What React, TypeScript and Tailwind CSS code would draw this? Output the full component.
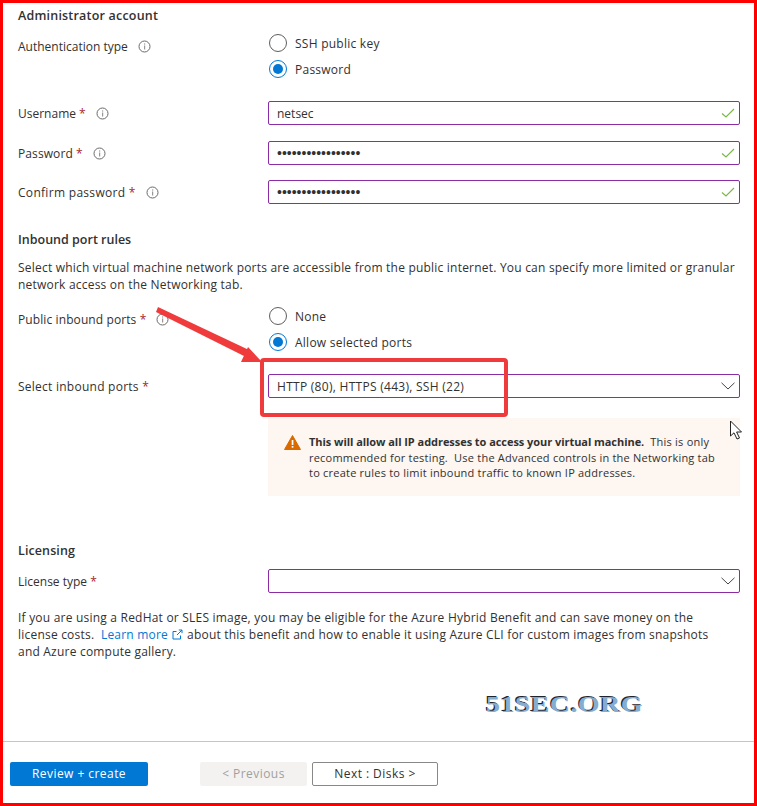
import React from "react";

const Info = () => (
  <svg width="13" height="13" viewBox="0 0 13 13" className="shrink-0">
    <circle cx="6.5" cy="6.5" r="5.5" fill="none" stroke="#6b6a69" strokeWidth="1" />
    <rect x="6" y="5.5" width="1.2" height="4" fill="#9a9896" />
    <rect x="6" y="3.4" width="1.2" height="1.2" fill="#9a9896" />
  </svg>
);

const Star = () => <span className="text-[#a4262c]"> *</span>;

const Label = ({ text, req, info, gap, track = "" }: { text: string; req?: boolean; info?: boolean; gap: string; track?: string }) => (
  <div className="flex items-center">
    <span className={track}>
      {text}
      {req && <Star />}
    </span>
    {info && (
      <span className={gap}>
        <Info />
      </span>
    )}
  </div>
);

const Check = () => (
  <svg width="14" height="12" viewBox="0 0 14 12" className="shrink-0">
    <path d="M1 6.5 L5 10 L13 2" fill="none" stroke="#7ab648" strokeWidth="1.1" />
  </svg>
);

const Chevron = () => (
  <svg width="14" height="8" viewBox="0 0 14 8" className="shrink-0">
    <path d="M0.5 0.8 L7 7 L13.5 0.8" fill="none" stroke="#323130" strokeWidth="0.9" />
  </svg>
);

const Field = ({ children, icon }: { children?: React.ReactNode; icon: React.ReactNode }) => (
  <div className="flex h-[24px] items-center justify-between rounded-[2px] border border-[#8a2da5] pl-[8px] pr-[3px]">
    <span className="flex items-center">{children}</span>
    <span className="mr-[1px] flex items-center">{icon}</span>
  </div>
);

const Dots = () => (
  <span className="text-[14px] leading-none text-[#323130] [font-family:'Liberation_Sans',sans-serif]">
    {"•••••••••••••••••"}
  </span>
);

const Radio = ({ label, on }: { label: string; on?: boolean }) => (
  <div className="flex h-[26px] items-center">
    <span
      className={
        on
          ? "flex h-[18px] w-[18px] items-center justify-center rounded-full border border-[#0078d4]"
          : "flex h-[18px] w-[18px] items-center justify-center rounded-full border border-[#605e5c]"
      }
    >
      {on && <span className="h-[10px] w-[10px] rounded-full bg-[#0078d4]" />}
    </span>
    <span className="ml-[8px] tracking-[0.25px]">{label}</span>
  </div>
);

export default function App() {
  return (
    <div className="relative flex h-[806px] w-[757px] flex-col overflow-hidden border-[3px] border-[#ff0000] bg-white text-[12px] leading-[17px] text-[#323130] [font-family:'Open_Sans',sans-serif]">
      <div className="flex-1 pl-[15px] pr-[14px] pt-[4px]">
        <h2 className="text-[12.5px] font-semibold leading-[17px] tracking-[0.2px]">Administrator account</h2>

        <div className="mt-[6px] grid grid-cols-[250px_1fr]">
          <div className="pt-[8px]">
            <Label text="Authentication type" info gap="ml-[10px]" />
          </div>
          <div className="pl-[1px]">
            <Radio label="SSH public key" />
            <Radio label="Password" on />
          </div>
        </div>

        <div className="mt-[19px] grid grid-cols-[250px_1fr] items-center">
          <Label text="Username" req info gap="ml-[10px]" />
          <Field icon={<Check />}>netsec</Field>
        </div>
        <div className="mt-[16px] grid grid-cols-[250px_1fr] items-center">
          <Label text="Password" req info gap="ml-[10px]" track="tracking-[0.1px]" />
          <Field icon={<Check />}>
            <Dots />
          </Field>
        </div>
        <div className="mt-[15px] grid grid-cols-[250px_1fr] items-center">
          <Label text="Confirm password" req info gap="ml-[10px]" track="tracking-[0.3px]" />
          <Field icon={<Check />}>
            <Dots />
          </Field>
        </div>

        <h2 className="mt-[27px] text-[12.5px] font-semibold leading-[17px]">Inbound port rules</h2>
        <p className="mt-[11px] w-[725px] tracking-[0.21px]">
          Select which virtual machine network ports are accessible from the public internet. You can specify more limited or granular network access on the Networking tab.
        </p>

        <div className="mt-[10px] grid grid-cols-[250px_1fr]">
          <div className="pt-[8px]">
            <Label text="Public inbound ports" req info gap="ml-[10px]" track="tracking-[0.1px]" />
          </div>
          <div className="pl-[1px]">
            <Radio label="None" />
            <Radio label="Allow selected ports" on />
          </div>
        </div>

        <div className="mt-[19px] grid grid-cols-[250px_1fr] items-center">
          <Label text="Select inbound ports" req gap="" track="tracking-[0.25px]" />
          <Field icon={<Chevron />}>
            <span className="tracking-[0.28px]">{"HTTP (80), HTTPS (443), SSH (22)"}</span>
          </Field>
        </div>

        <div className="ml-[250px] mt-[20px] flex h-[78px] items-start bg-[#fdf6f1] pl-[16px] pr-[20px] pt-[16px]">
          <svg width="17" height="15" viewBox="0 0 17 15" className="mt-[1px] shrink-0">
            <path d="M8.5 0.5 L16.5 14.5 H0.5 Z" fill="#d96a00" stroke="#d96a00" strokeLinejoin="round" />
            <rect x="7.7" y="5" width="1.7" height="5" fill="#fff" />
            <rect x="7.7" y="11" width="1.7" height="1.7" fill="#fff" />
          </svg>
          <p className="ml-[8px] text-[11px] leading-[15.5px] tracking-[0.22px]">
            <span className="font-bold tracking-[-0.05px]">This will allow all IP addresses to access your virtual machine.</span>
            {"\u00a0 This is only recommended for testing.\u00a0 Use the Advanced controls in the Networking tab to create rules to limit inbound traffic to known IP addresses."}
          </p>
        </div>

        <h2 className="mt-[46px] text-[12.5px] font-semibold leading-[17px] tracking-[0.1px]">Licensing</h2>
        <div className="mt-[10px] grid grid-cols-[250px_1fr] items-center">
          <Label text="License type" req gap="" />
          <Field icon={<Chevron />} />
        </div>
        <p className="mt-[16px] w-[692px] tracking-[0.21px]">
          If you are using a RedHat or SLES image, you may be eligible for the Azure Hybrid Benefit and can save money on the license costs.{"\u00a0 "}
          <span className="text-[#0078d4]">Learn more</span>
          <svg width="11" height="11" viewBox="0 0 11 11" className="mx-[4px] inline-block align-[-1px]">
            <path d="M8.5 6.5 V10 H1 V2.5 H4.5 M5 6 L10 1 M6.8 1 H10 V4.2" fill="none" stroke="#0078d4" strokeWidth="1" />
          </svg>
          about this benefit and how to enable it using Azure CLI for custom images from snapshots and Azure compute gallery.
        </p>
      </div>

      <div className="flex h-[62px] items-start gap-[3px] border-t border-[#c8c6c4] pl-[7px] pt-[20px]">
        <button className="h-[24px] w-[138px] rounded-[2px] bg-[#0078d4] pb-[1px] tracking-[0.45px] text-white">Review + create</button>
        <button className="ml-[49px] h-[24px] w-[107px] rounded-[2px] bg-[#f3f2f1] pb-[1px] tracking-[0.45px] text-[#a19f9d]">{"< Previous"}</button>
        <button className="ml-[2px] h-[24px] w-[126px] rounded-[2px] border border-[#8a8886] bg-white pb-[1px] tracking-[0.45px]">{"Next : Disks >"}</button>
      </div>

      {/* annotations lying over the form */}
      <div className="absolute left-[257px] top-[355px] h-[59px] w-[248px] rounded-[4px] border-[4px] border-[#ef3b3b]" />
      <svg width="140" height="70" viewBox="0 0 140 70" className="absolute left-[147px] top-[301px]">
        <path d="M8 3 L99 46 L96 53 L6 8 Z" fill="#ef3b3b" />
        <path d="M112 58 L98 43 L91 58 Z" fill="#ef3b3b" />
      </svg>
      <svg width="16" height="20" viewBox="0 0 16 20" className="absolute left-[726px] top-[417px]">
        <path d="M1.5 1 V16 L5 12.8 L8 19 L10.5 18 L7.6 12 H12.5 Z" fill="#fff" stroke="#222" strokeWidth="1" />
      </svg>
      <div className="absolute left-[483px] top-[688px] origin-left scale-x-[1.22] text-[23px] font-bold leading-[28px] tracking-[0.3px] text-[#86acd0] [font-family:'Liberation_Serif',serif] [text-shadow:-1px_-1px_0_#1c2430]">
        51SEC.ORG
      </div>
    </div>
  );
}
